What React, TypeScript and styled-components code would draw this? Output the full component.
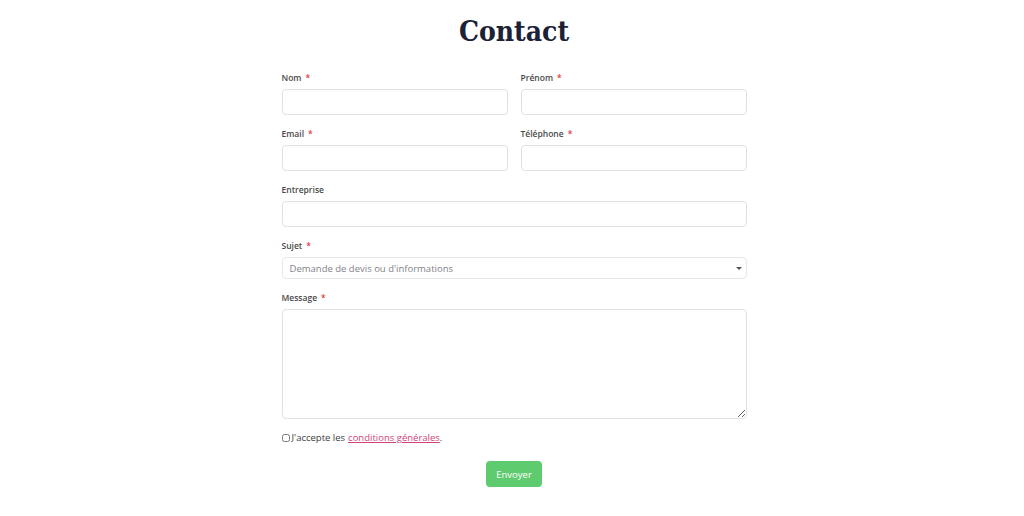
import React from 'react';
import styled, { createGlobalStyle } from 'styled-components';

const GlobalStyle = createGlobalStyle`
  html, body {
    margin: 0;
    padding: 0;
    background: #fff;
  }
  body {
    font-family: "Open Sans", "Liberation Sans", sans-serif;
    color: #333;
  }
`;

const Page = styled.div`
  width: 1024px;
  display: flex;
  flex-direction: column;
  align-items: center;
  padding-left: 4px;
  box-sizing: border-box;
`;

const Title = styled.h1`
  margin: 10px 0 18px;
  font-family: "DejaVu Serif Condensed", "DejaVu Serif", serif;
  font-stretch: condensed;
  font-weight: 700;
  font-size: 28px;
  line-height: 44px;
  color: #1b2235;
`;

const Form = styled.form`
  width: 465px;
  display: flex;
  flex-direction: column;
`;

const Row = styled.div`
  display: grid;
  grid-template-columns: 1fr 1fr;
  column-gap: 13px;
`;

const Field = styled.div`
  display: flex;
  flex-direction: column;
  margin-bottom: 13px;
`;

const Label = styled.label`
  font-size: 8.5px;
  line-height: 12px;
  font-weight: 600;
  color: #4a4a4a;
  margin-bottom: 5px;
`;

const Star = styled.span`
  color: #e0383e;
  margin-left: 4px;
`;

const Input = styled.input`
  display: block;
  height: 26px;
  box-sizing: border-box;
  border: 1px solid #dfe1e6;
  border-radius: 4px;
  background: #fff;
  outline: none;
`;

const SelectWrap = styled.div`
  position: relative;
  height: 22px;
`;

const Select = styled.select`
  display: block;
  width: 100%;
  height: 22px;
  box-sizing: border-box;
  border: 1px solid #e6e8ec;
  border-radius: 4px;
  background: #fff;
  padding: 0 7px;
  font-family: inherit;
  font-size: 9.5px;
  color: #80838a;
  appearance: none;
  outline: none;
`;

const Caret = styled.span`
  position: absolute;
  right: 5px;
  top: 10px;
  width: 0;
  height: 0;
  border-left: 3.5px solid transparent;
  border-right: 3.5px solid transparent;
  border-top: 3.5px solid #555;
  pointer-events: none;
`;

const TextArea = styled.textarea`
  display: block;
  height: 110px;
  box-sizing: border-box;
  border: 1px solid #dfe1e6;
  border-radius: 4px;
  resize: vertical;
  outline: none;
`;

const Consent = styled.label`
  display: flex;
  align-items: center;
  font-size: 9.5px;
  line-height: 12px;
  color: #3c3c3c;
`;

const Check = styled.input`
  width: 8px;
  height: 8px;
  margin: 0 2px 0 0;
`;

const TermsLink = styled.a`
  color: #d0437a;
  text-decoration: underline;
  margin-left: 3px;
`;

const Actions = styled.div`
  display: flex;
  justify-content: center;
  margin-top: 17px;
`;

const Submit = styled.button`
  width: 56px;
  height: 26px;
  border: none;
  border-radius: 4px;
  background: #5fcb6f;
  color: #fff;
  font-family: inherit;
  font-size: 9.5px;
  font-weight: 500;
  cursor: pointer;
`;

const App: React.FC = () => {
  return (
    <>
      <GlobalStyle />
      <Page>
        <Title>Contact</Title>
        <Form onSubmit={(e) => e.preventDefault()}>
          <Row>
            <Field>
              <Label>Nom<Star>*</Star></Label>
              <Input type="text" />
            </Field>
            <Field>
              <Label>Prénom<Star>*</Star></Label>
              <Input type="text" />
            </Field>
          </Row>
          <Row>
            <Field>
              <Label>Email<Star>*</Star></Label>
              <Input type="email" />
            </Field>
            <Field>
              <Label>Téléphone<Star>*</Star></Label>
              <Input type="tel" />
            </Field>
          </Row>
          <Field>
            <Label>Entreprise</Label>
            <Input type="text" />
          </Field>
          <Field>
            <Label>Sujet<Star>*</Star></Label>
            <SelectWrap>
              <Select defaultValue="devis">
                <option value="devis">Demande de devis ou d'informations</option>
              </Select>
              <Caret />
            </SelectWrap>
          </Field>
          <Field>
            <Label>Message<Star>*</Star></Label>
            <TextArea />
          </Field>
          <Consent>
            <Check type="checkbox" />
            J'accepte les<TermsLink href="#">conditions générales</TermsLink>.
          </Consent>
          <Actions>
            <Submit type="submit">Envoyer</Submit>
          </Actions>
        </Form>
      </Page>
    </>
  );
};

export default App;
